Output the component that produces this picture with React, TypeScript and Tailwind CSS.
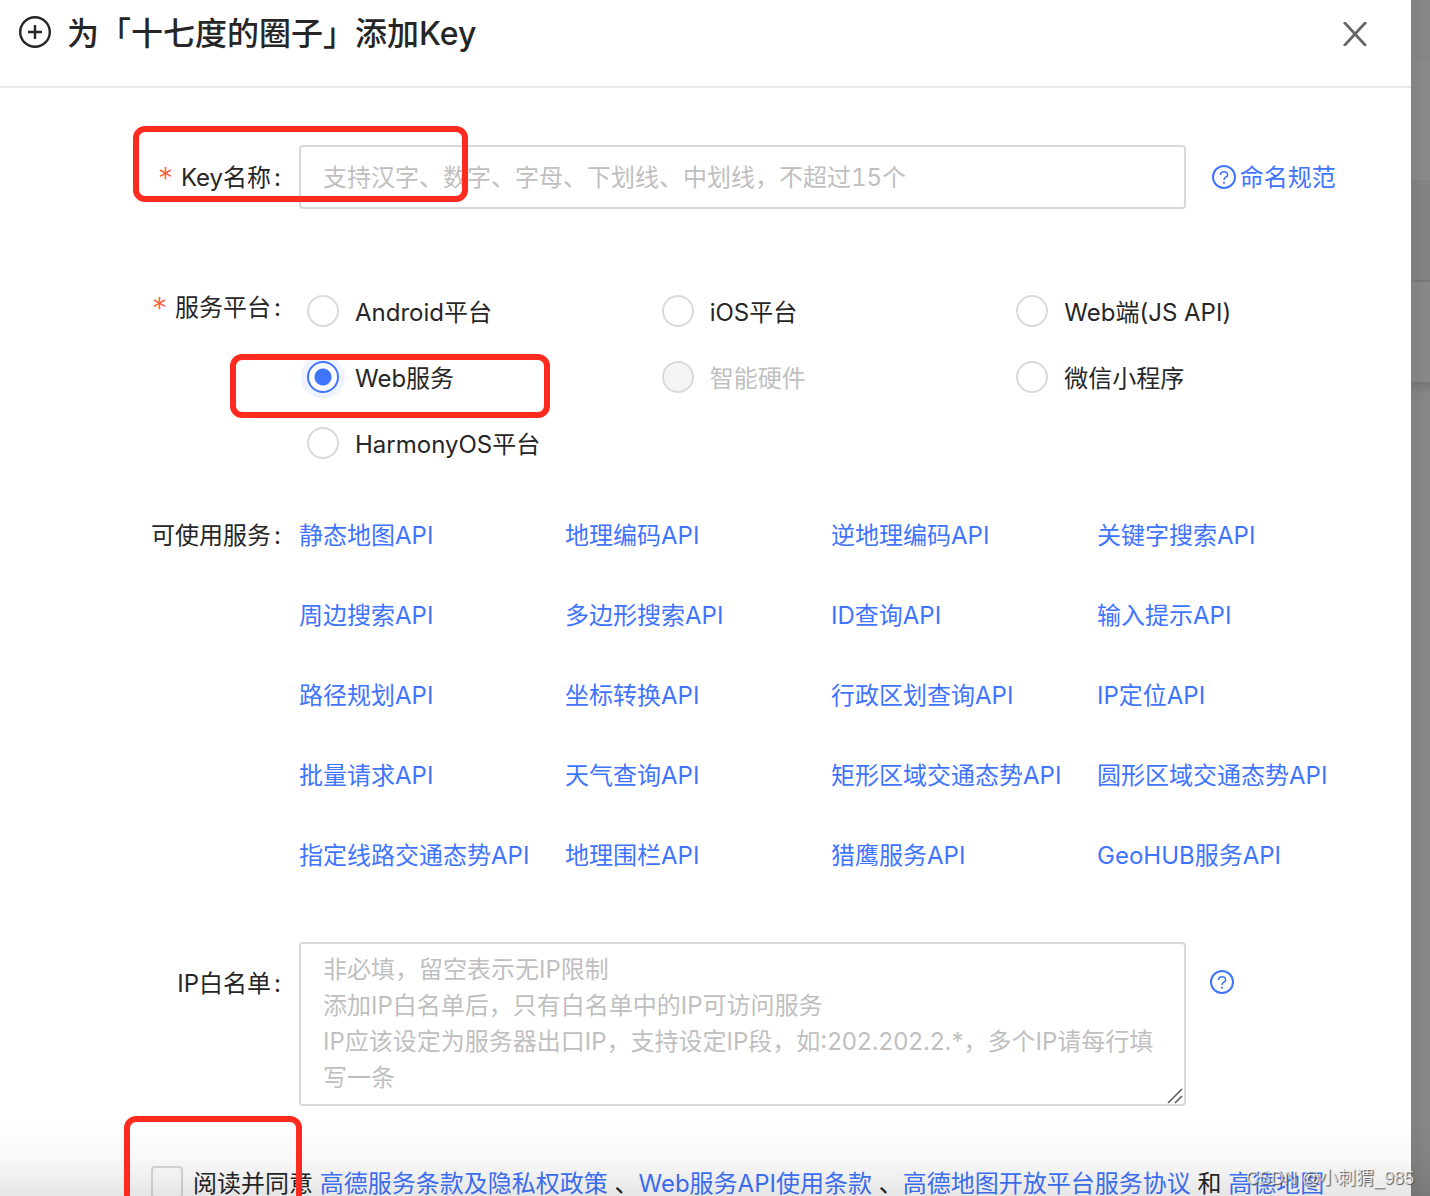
import { useState } from 'react';

const platforms = [
    { id: 'android', name: 'Android平台' },
    { id: 'ios', name: 'iOS平台' },
    { id: 'js', name: 'Web端(JS API)' },
    { id: 'web', name: 'Web服务' },
    { id: 'hardware', name: '智能硬件', disabled: true },
    { id: 'wechat', name: '微信小程序' },
    { id: 'harmony', name: 'HarmonyOS平台' },
];

const services = [
    '静态地图API', '地理编码API', '逆地理编码API', '关键字搜索API',
    '周边搜索API', '多边形搜索API', 'ID查询API', '输入提示API',
    '路径规划API', '坐标转换API', '行政区划查询API', 'IP定位API',
    '批量请求API', '天气查询API', '矩形区域交通态势API', '圆形区域交通态势API',
    '指定线路交通态势API', '地理围栏API', '猎鹰服务API', 'GeoHUB服务API',
];

const ipPlaceholder = '非必填，留空表示无IP限制\n添加IP白名单后，只有白名单中的IP可访问服务\nIP应该设定为服务器出口IP，支持设定IP段，如:202.202.2.*，多个IP请每行填写一条';

const HelpIcon = () => (
    <svg viewBox="0 0 24 24" className="size-6 shrink-0" fill="none" stroke="currentColor" strokeWidth="2" aria-hidden="true">
        <circle cx="12" cy="12" r="11" />
        <path d="M8.4 9.9C8.4 7.9 10 6.7 12 6.7s3.6 1.2 3.6 3c0 1.3-.8 2.1-1.9 2.6-1.2.6-1.7 1.2-1.7 2.7" strokeWidth="1.6" />
        <path d="M12 16.8v2" strokeWidth="1.8" />
    </svg>
);

const Required = () => (
    <span className="mr-2 text-[30px] font-light text-[#ff5c3c]">*</span>
);

const Colon = () => <span className="ml-[3px] mr-[18px]">:</span>;

const Highlight = ({ className }: { className: string }) => (
    <div className={`pointer-events-none absolute z-10 rounded-xl border-6 border-[#ff2b1f] ${className}`} />
);

const Header = () => (
    <header className="flex h-22 items-start justify-between border-b-2 border-[#e8e8e8] pl-[18px] pr-11">
        <div className="flex items-center gap-[15px] pt-2">
            <svg viewBox="0 0 34 34" className="size-[34px]" fill="none" stroke="currentColor" strokeWidth="2.4" aria-hidden="true">
                <circle cx="17" cy="16" r="14.8" />
                <path d="M10 16h14M17 9v14" />
            </svg>
            <h1 className="pt-0.5 text-[32px] leading-12 font-medium">为「十七度的圈子」添加Key</h1>
        </div>
        <button type="button" aria-label="关闭" className="mt-[22px] text-[#666]">
            <svg viewBox="0 0 24 24" className="size-6" fill="none" stroke="currentColor" strokeWidth="2.8">
                <path d="M1 0l22 24M23 0L1 24" />
            </svg>
        </button>
    </header>
);

const Backdrop = () => (
    <aside className="relative flex w-[19px] shrink-0 flex-col bg-[#868887]">
        <div className="h-[61px] bg-[#868887]" />
        <div className="h-[119px] bg-[#8b8989]" />
        <div className="h-[102px] border-b-2 border-[#7b7979] bg-[#858383]" />
        <div className="h-[100px] bg-[#868988]" />
        <div className="h-3 bg-linear-to-b from-[#777978] to-[#868887]" />
        <div className="absolute inset-0 bg-linear-to-r from-black/5 to-transparent" />
    </aside>
);

const App = () => {
    const [platform, setPlatform] = useState('web');
    const [agreed, setAgreed] = useState(false);

    return (
        <div className="relative flex h-screen overflow-hidden bg-white font-['Inter','Noto_Sans_CJK_SC',sans-serif] text-2xl leading-9 text-[#262626]">
            <main className="min-w-0 flex-1">
                <Header />
                <form className="px-12 pt-[57px]">
                    <div className="relative flex h-16 items-center">
                        <Highlight className="-top-[19px] left-[85px] h-19 w-[335px]" />
                        <label htmlFor="key-name" className="flex w-[251px] shrink-0 justify-end whitespace-nowrap pt-0.5">
                            <Required />Key名称<Colon />
                        </label>
                        <div className="flex flex-1 items-center">
                            <input
                                id="key-name"
                                type="text"
                                placeholder="支持汉字、数字、字母、下划线、中划线，不超过15个"
                                className="h-16 w-5/6 rounded-sm border-2 border-[#d9d9d9] px-[22px] tabular-nums outline-none placeholder:text-[#bfbfbf]"
                            />
                            <a href="#naming" className="ml-[26px] flex items-center gap-1 whitespace-nowrap text-[#3f74ff]">
                                <HelpIcon />
                                <span className="pt-0.5">命名规范</span>
                            </a>
                        </div>
                    </div>

                    <div role="radiogroup" aria-label="服务平台" className="relative mt-[69px] flex">
                        <Highlight className="left-[182px] top-[76px] h-16 w-[320px]" />
                        <div className="mt-3 flex w-[251px] shrink-0 justify-end">
                            <Required />服务平台<Colon />
                        </div>
                        <div className="grid flex-1 auto-rows-[66px] grid-cols-3">
                            {platforms.map((item) => (
                                <label key={item.id} className={`flex items-center gap-4 pl-2 ${item.disabled ? 'text-[#bfbfbf]' : ''}`}>
                                    <input
                                        type="radio"
                                        name="platform"
                                        value={item.id}
                                        checked={platform === item.id}
                                        disabled={item.disabled}
                                        onChange={() => setPlatform(item.id)}
                                        className="size-8 shrink-0 appearance-none rounded-full border-2 border-[#d9d9d9] bg-white checked:border-[#3f74ff] checked:bg-[radial-gradient(circle,#3f74ff_8px,#fff_9px)] checked:ring-6 checked:ring-[#eff3ff] disabled:bg-[#f5f5f5]"
                                    />
                                    <span className="pt-1">{item.name}</span>
                                </label>
                            ))}
                        </div>
                    </div>

                    <div className="mt-[42px] flex">
                        <div className="flex w-[251px] shrink-0 justify-end">
                            可使用服务<Colon />
                        </div>
                        <div className="grid flex-1 grid-cols-4 gap-y-11">
                            {services.map((service) => (
                                <a key={service} href="#service" className="whitespace-nowrap text-[#3f74ff]">{service}</a>
                            ))}
                        </div>
                    </div>

                    <div className="mt-[68px] flex">
                        <label htmlFor="ip-list" className="mt-6 flex w-[251px] shrink-0 justify-end">
                            IP白名单<Colon />
                        </label>
                        <div className="flex flex-1 items-start">
                            <div className="relative flex w-5/6">
                                <textarea
                                    id="ip-list"
                                    placeholder={ipPlaceholder}
                                    className="h-[164px] w-full resize-none overflow-hidden rounded-sm border-2 border-[#d9d9d9] px-[22px] py-2 outline-none placeholder:text-[#bfbfbf]"
                                />
                                <svg viewBox="0 0 16 16" className="pointer-events-none absolute right-[3px] bottom-0.5 size-4" stroke="#555" strokeWidth="1.5" aria-hidden="true">
                                    <path d="M1 15L15 1M8 15l7-7" />
                                </svg>
                            </div>
                            <a href="#ip-help" aria-label="IP白名单说明" className="ml-6 mt-7 text-[#3f74ff]">
                                <HelpIcon />
                            </a>
                        </div>
                    </div>

                    <div className="relative mt-[60px] flex items-start whitespace-nowrap pl-[103px]">
                        <Highlight className="-top-[50px] left-[76px] h-40 w-[178px]" />
                        <input
                            id="agree"
                            type="checkbox"
                            checked={agreed}
                            onChange={(e) => setAgreed(e.target.checked)}
                            className="mr-2.5 size-8 shrink-0 appearance-none rounded-sm border-2 border-[#d9d9d9] bg-white checked:bg-[#3f74ff]"
                        />
                        <p>
                            <label htmlFor="agree">阅读并同意</label>{' '}
                            <a href="#privacy" className="text-[#3f74ff]">高德服务条款及隐私权政策</a>{' 、'}
                            <a href="#web-terms" className="text-[#3f74ff]">Web服务API使用条款</a>{' 、'}
                            <a href="#open-terms" className="text-[#3f74ff]">高德地图开放平台服务协议</a>{' 和 '}
                            <a href="#map-terms" className="text-[#3f74ff]">高德地图</a>
                        </p>
                    </div>
                </form>
            </main>
            <Backdrop />
            {/* sombra inferior */}
            <div className="pointer-events-none absolute inset-x-0 bottom-0 h-[72px] bg-linear-to-b from-black/0 via-black/3 to-black/10" />
            <span className="pointer-events-none absolute bottom-1 right-4 font-['Liberation_Sans','Noto_Sans_CJK_SC',sans-serif] text-lg leading-7 text-white/70 [text-shadow:1px_1px_1px_#555]">CSDN @小刺猬_985</span>
        </div>
    );
};

export default App;
